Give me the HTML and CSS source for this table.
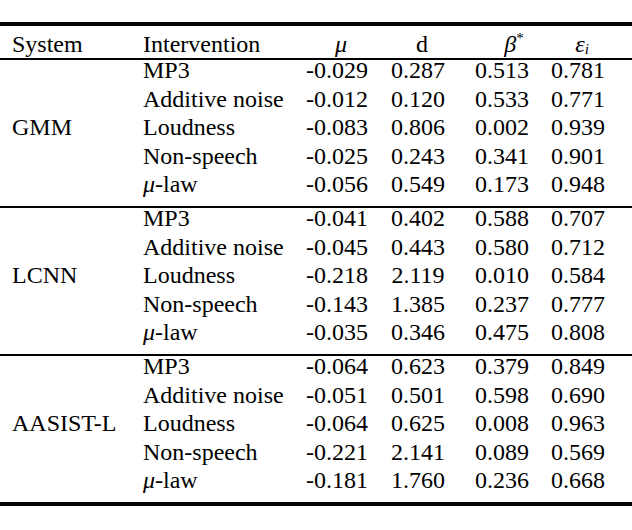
FILE: index.html
```html
<!DOCTYPE html>
<html>
<head>
<meta charset="utf-8">
<link rel="stylesheet" href="styles.css">
</head>
<body>
<p class="caption-prev">random variance.</p>
<table class="results">
  <colgroup>
    <col class="c-sys"><col class="c-int"><col class="c-mu"><col class="c-d"><col class="c-beta"><col class="c-eps">
  </colgroup>
  <thead>
    <tr>
      <th class="sys">System</th>
      <th class="int">Intervention</th>
      <th class="num"><i>μ</i></th>
      <th class="num">d</th>
      <th class="num beta"><i>β</i><sup>*</sup></th>
      <th class="num"><i>ε</i><sub><i>i</i></sub></th>
    </tr>
  </thead>
  <tbody class="group">
    <tr><td class="sys" rowspan="5">GMM</td><td class="int">MP3</td><td class="num">-0.029</td><td class="num">0.287</td><td class="num">0.513</td><td class="num">0.781</td></tr>
    <tr><td class="int">Additive noise</td><td class="num">-0.012</td><td class="num">0.120</td><td class="num">0.533</td><td class="num">0.771</td></tr>
    <tr><td class="int">Loudness</td><td class="num">-0.083</td><td class="num">0.806</td><td class="num">0.002</td><td class="num">0.939</td></tr>
    <tr><td class="int">Non-speech</td><td class="num">-0.025</td><td class="num">0.243</td><td class="num">0.341</td><td class="num">0.901</td></tr>
    <tr class="last"><td class="int"><i>μ</i>-law</td><td class="num">-0.056</td><td class="num">0.549</td><td class="num">0.173</td><td class="num">0.948</td></tr>
  </tbody>
  <tbody class="group">
    <tr><td class="sys" rowspan="5">LCNN</td><td class="int">MP3</td><td class="num">-0.041</td><td class="num">0.402</td><td class="num">0.588</td><td class="num">0.707</td></tr>
    <tr><td class="int">Additive noise</td><td class="num">-0.045</td><td class="num">0.443</td><td class="num">0.580</td><td class="num">0.712</td></tr>
    <tr><td class="int">Loudness</td><td class="num">-0.218</td><td class="num">2.119</td><td class="num">0.010</td><td class="num">0.584</td></tr>
    <tr><td class="int">Non-speech</td><td class="num">-0.143</td><td class="num">1.385</td><td class="num">0.237</td><td class="num">0.777</td></tr>
    <tr class="last"><td class="int"><i>μ</i>-law</td><td class="num">-0.035</td><td class="num">0.346</td><td class="num">0.475</td><td class="num">0.808</td></tr>
  </tbody>
  <tbody class="group final">
    <tr><td class="sys" rowspan="5">AASIST-L</td><td class="int">MP3</td><td class="num">-0.064</td><td class="num">0.623</td><td class="num">0.379</td><td class="num">0.849</td></tr>
    <tr><td class="int">Additive noise</td><td class="num">-0.051</td><td class="num">0.501</td><td class="num">0.598</td><td class="num">0.690</td></tr>
    <tr><td class="int">Loudness</td><td class="num">-0.064</td><td class="num">0.625</td><td class="num">0.008</td><td class="num">0.963</td></tr>
    <tr><td class="int">Non-speech</td><td class="num">-0.221</td><td class="num">2.141</td><td class="num">0.089</td><td class="num">0.569</td></tr>
    <tr class="last"><td class="int"><i>μ</i>-law</td><td class="num">-0.181</td><td class="num">1.760</td><td class="num">0.236</td><td class="num">0.668</td></tr>
  </tbody>
</table>
<p class="caption-next">and a range of</p>
</body>
</html>
```
FILE: styles.css
```css
html, body {
  margin: 0;
  padding: 0;
  background: #ffffff;
}
body {
  width: 632px;
  height: 530px;
  overflow: hidden;
  font-family: "Liberation Serif", "Times New Roman", serif;
  font-size: 24px;
  color: #000;
}
.caption-prev {
  margin: -18px 0 0 0;
  padding-left: 12px;
  line-height: 20px;
  color: #b5b5b5;
}
.caption-next {
  margin: 24px 0 0 0;
  padding-left: 12px;
  line-height: 20px;
  color: #222;
}
.results {
  margin-top: 20px;
  width: 632px;
  table-layout: fixed;
  border-collapse: separate;
  border-spacing: 0;
}
.c-sys { width: 143px; }
.c-int { width: 155px; }
.c-mu { width: 78px; }
.c-d { width: 84px; }
.c-beta { width: 84px; }
.c-eps { width: 88px; }

.results th,
.results td {
  font-weight: normal;
  line-height: 20px;
  padding: 0 0 8.5px 0;
  white-space: nowrap;
  vertical-align: top;
}
.results thead th {
  border-top: 4px solid #000;
  border-bottom: 2px solid #000;
  padding-top: 8px;
  padding-bottom: 4px;
}
.results .sys {
  text-align: left;
  padding-left: 12px;
}
.results .int {
  text-align: left;
}
.results .num {
  text-align: center;
}
.results thead th.num {
  padding-left: 8px;
}
.results thead th.beta {
  padding-left: 24px;
}
.results th:last-child,
.results td:last-child {
  padding-right: 20px;
}
.results td.sys {
  vertical-align: middle;
  padding-bottom: 12px;
  border-bottom: 2px solid #000;
}
.results tr.last td {
  padding-bottom: 12px;
  border-bottom: 2px solid #000;
}
.results .final tr.last td,
.results .final td.sys {
  border-bottom: 4px solid #000;
}
.results sup {
  font-size: 15px;
  line-height: 0;
  vertical-align: 9px;
}
.results sub {
  font-size: 15px;
  line-height: 0;
  vertical-align: -2px;
}
```
